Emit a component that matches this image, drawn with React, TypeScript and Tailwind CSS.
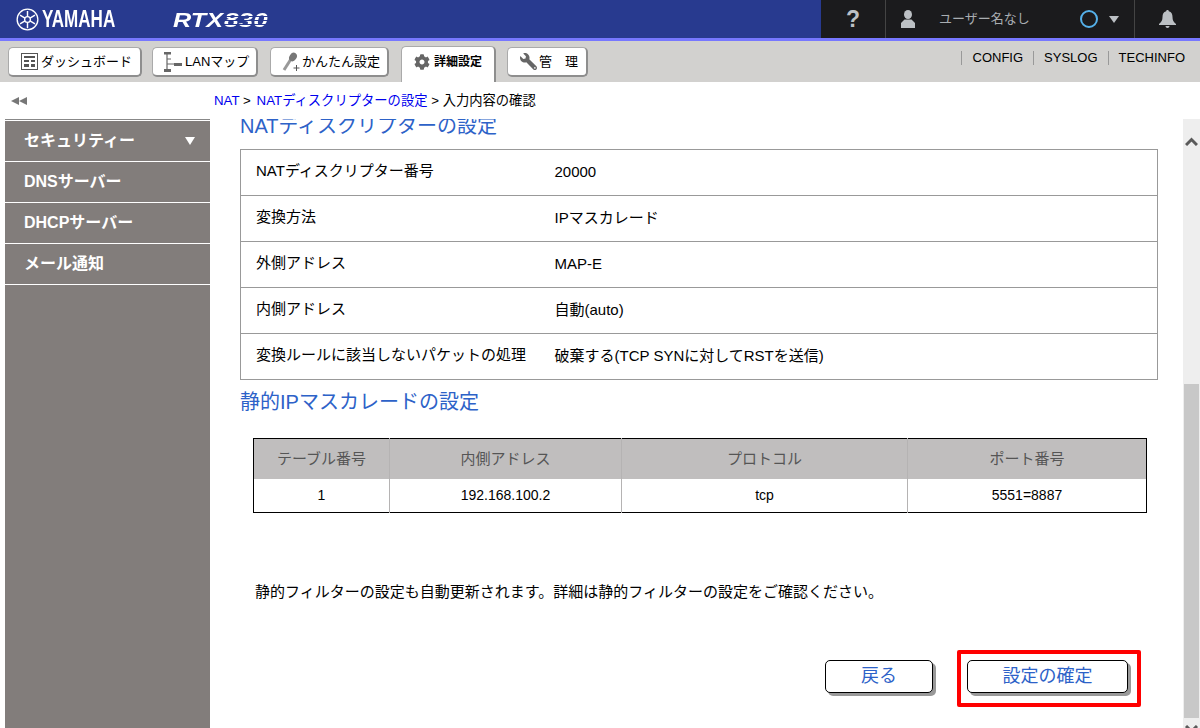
import { FaCog, FaWrench } from "react-icons/fa";

const font = "font-['Liberation_Sans','Noto_Sans_CJK_JP',sans-serif]";

const descriptorRows = [
  ["NATディスクリプター番号", "20000"],
  ["変換方法", "IPマスカレード"],
  ["外側アドレス", "MAP-E"],
  ["内側アドレス", "自動(auto)"],
  ["変換ルールに該当しないパケットの処理", "破棄する(TCP SYNに対してRSTを送信)"],
];

const sideItems = ["セキュリティー", "DNSサーバー", "DHCPサーバー", "メール通知"];

function YamahaMark() {
  return (
    <svg width="23" height="23" viewBox="0 0 24 24" fill="none" stroke="#fff" className="shrink-0">
      <circle cx="12" cy="12" r="10.8" strokeWidth="1.4" />
      <circle cx="12" cy="12" r="3" strokeWidth="1.4" />
      <g strokeWidth="1.5">
        <path d="M12 3v6M12 15v6M4.2 7.5l5.2 3M14.6 13.5l5.2 3M4.2 16.5l5.2-3M14.6 10.5l5.2-3" />
      </g>
    </svg>
  );
}

function DashIcon() {
  return (
    <svg width="17" height="17" viewBox="0 0 17 17" className="shrink-0">
      <rect x="0.5" y="0.5" width="16" height="16" fill="#fff" stroke="#555" />
      <path d="M3 3h11v2H3zM3 7h5v2H3zM10 7h4v2h-4zM3 11h5v3H3zM10 11h4v3h-4z" fill="#555" />
    </svg>
  );
}

function LanIcon() {
  return (
    <svg width="18" height="20" viewBox="0 0 18 20" className="shrink-0">
      <path d="M0 0h7v2.500H0zM0 17h7v3H0zM10 11h8v3h-8z" fill="#666" />
      <path d="M3 2v15M3 12h7M3 7h4" stroke="#666" strokeWidth="1.200" fill="none" />
    </svg>
  );
}

function KeyIcon() {
  return (
    <svg width="20" height="20" viewBox="0 0 20 20" className="shrink-0">
      <path d="M2 18 L9 7" stroke="#999" strokeWidth="3" />
      <ellipse cx="11" cy="5" rx="3.500" ry="4.500" transform="rotate(35 11 5)" fill="#777" />
      <path d="M14.500 13v6M11.500 16h6" stroke="#555" strokeWidth="1" />
    </svg>
  );
}

function UserIcon() {
  return (
    <svg width="14" height="18" viewBox="0 0 14 18" className="shrink-0">
      <ellipse cx="7" cy="4.500" rx="4" ry="4.500" fill="#bcc0c4" />
      <path d="M3.500 9.500h7L14 13v5H0v-5z" fill="#bcc0c4" />
    </svg>
  );
}

function BellIcon() {
  return (
    <svg width="17" height="18" viewBox="0 0 17 18">
      <path
        d="M8.500 0c1 0 1.300.7 1.300 1.300C12.500 2 13.500 4 13.500 7c0 3.500 1 5 3.500 7v1H0v-1c2.500-2 3.500-3.500 3.500-7 0-3 1-5 3.700-5.700C7.200.7 7.500 0 8.500 0z"
        fill="#bcc0c4"
      />
      <path d="M6.500 16h4c0 1.200-1 2-2 2s-2-.8-2-2z" fill="#bcc0c4" />
    </svg>
  );
}

function NavButton({ icon, label, className }: { icon: React.ReactNode; label: string; className: string }) {
  return (
    <div
      className={`flex h-[30px] items-center rounded-[5px] border border-[#aaa] border-r-2 border-b-2 border-r-[#8e8e8e] border-b-[#8e8e8e] bg-white text-[13px] text-black ${className}`}
    >
      {icon}
      <span>{label}</span>
    </div>
  );
}

export default function App() {
  return (
    <div className={`${font} flex h-[728px] w-[1200px] flex-col overflow-hidden bg-white`}>
      <header className="flex h-[41px] shrink-0 border-b-[3px] border-[#7777ff] bg-[#283a8f]">
        <div className="flex w-[821px] items-center pl-[16px]">
          <YamahaMark />
          <span className="ml-[3px] w-[75px] origin-left scale-x-[0.71] text-[24px] leading-none font-bold text-white">
            YAMAHA
          </span>
          <span className="ml-[56px] flex text-[21px] leading-none font-black text-white italic">
            <span className="w-[51px] origin-left scale-x-[1.2]">RTX</span>
            <span className="origin-left scale-x-[1.25] bg-[repeating-linear-gradient(180deg,#fff_0,#fff_3px,#283a8f_3px,#283a8f_4px)] bg-clip-text text-transparent">
              830
            </span>
          </span>
        </div>
        <div className="flex flex-1 items-center bg-[#1b1b1d] text-[#bcc0c4]">
          <div className="flex h-full w-[65px] items-center justify-center border-r border-[#444] text-[23px] font-bold">
            ?
          </div>
          <div className="ml-[15px]">
            <UserIcon />
          </div>
          <span className="ml-[24px] w-[141px] text-[13px] text-[#a9adb1]">ユーザー名なし</span>
          <div className="h-[18px] w-[18px] rounded-full border-2 border-[#55b1ea]" />
          <div className="ml-[11px] h-0 w-0 border-x-[5px] border-t-[7px] border-x-transparent border-t-[#bcc0c4]" />
          <div className="ml-[15px] flex h-full flex-1 items-center justify-center border-l border-[#444]">
            <BellIcon />
          </div>
        </div>
      </header>

      <nav className="flex h-[41px] shrink-0 items-start bg-[#d2d1cf] pt-[6px] pl-[8px]">
        <NavButton className="w-[134px] gap-[3px] pl-[12px]" icon={<DashIcon />} label="ダッシュボード" />
        <NavButton className="ml-[10px] w-[106px] gap-[3px] pl-[11px]" icon={<LanIcon />} label="LANマップ" />
        <NavButton className="ml-[12px] w-[119px] gap-[0px] pl-[11px]" icon={<KeyIcon />} label="かんたん設定" />
        <div className="mt-[-1px] ml-[12px] flex h-[36px] w-[95px] items-center gap-[4px] rounded-t-[5px] border border-r-2 border-b-0 border-[#aaa] border-r-[#8e8e8e] bg-white pb-[6px] pl-[12px] text-[12px] font-bold text-black">
          <FaCog size={16} color="#666" className="shrink-0" />
          <span>詳細設定</span>
        </div>
        <NavButton
          className="ml-[11px] w-[81px] gap-[2px] pl-[12px]"
          icon={<FaWrench size={17} color="#666" className="shrink-0 scale-x-[-1]" />}
          label="管　理"
        />
        <div className="ml-auto flex pt-[4px] pr-[15px] text-[13px] leading-[14px] text-black">
          <span className="border-l border-[#999] pl-[11px]">CONFIG</span>
          <span className="ml-[10px] border-l border-[#999] pl-[10px]">SYSLOG</span>
          <span className="ml-[10px] border-l border-[#999] pl-[10px]">TECHINFO</span>
        </div>
      </nav>

      <div className="flex h-[37px] shrink-0 items-center">
        <div className="flex w-[214px] pl-[11px]">
          <div className="h-0 w-0 border-y-[4px] border-r-[8px] border-y-transparent border-r-[#777]" />
          <div className="h-0 w-0 border-y-[4px] border-r-[8px] border-y-transparent border-r-[#777]" />
        </div>
        <p className="text-[13.3px] text-black">
          <span className="text-[#0000ee]">NAT</span> &gt; <span className="ml-[2px] text-[#0000ee]">NATディスクリプターの設定</span> &gt; 入力内容の確認
        </p>
      </div>

      <div className="flex min-h-0 flex-1">
        <aside className="ml-[5px] w-[205px] shrink-0 border-t border-[#888] bg-[#827d7b] text-[16px] font-bold text-white">
          {sideItems.map((item, i) => (
            <div
              key={item}
              className={`flex items-center justify-between border-b border-white pr-[15px] pl-[19px] ${i === 0 ? "h-[42px] border-t" : "h-[41px]"}`}
            >
              <span>{item}</span>
              {i === 0 && <div className="h-0 w-0 border-x-[5px] border-t-[8px] border-x-transparent border-t-white" />}
            </div>
          ))}
        </aside>

        <main className="relative min-w-0 flex-1 overflow-hidden pl-[30px]">
          <h2 className="mt-[-6px] text-[20px] leading-[26px] text-[#2d62c8]">NATディスクリプターの設定</h2>
          <table className="mt-[10px] w-[918px] border-collapse text-[15px] text-black">
            <tbody>
              {descriptorRows.map(([name, value]) => (
                <tr key={name} className="h-[46px] border border-[#999]">
                  <td className="w-[314px] pb-[2px] pl-[15px]">{name}</td>
                  <td>{value}</td>
                </tr>
              ))}
            </tbody>
          </table>
          <h2 className="mt-[9px] text-[20px] leading-[26px] text-[#2d62c8]">静的IPマスカレードの設定</h2>

          <table className="mt-[23px] ml-[13px] w-[894px] table-fixed border-collapse border border-black text-center text-[15px]">
            <thead>
              <tr className="h-[40px] bg-[#c0bebe] text-[#555]">
                <th className="w-[136px] border-r border-[#b5b3b3] font-normal">テーブル番号</th>
                <th className="w-[232px] border-r border-[#b5b3b3] font-normal">内側アドレス</th>
                <th className="w-[286px] border-r border-[#b5b3b3] font-normal">プロトコル</th>
                <th className="font-normal">ポート番号</th>
              </tr>
            </thead>
            <tbody>
              <tr className="h-[34px] text-[14px] text-black">
                <td className="border-r border-[#b5b3b3]">1</td>
                <td className="border-r border-[#b5b3b3]">192.168.100.2</td>
                <td className="border-r border-[#b5b3b3]">tcp</td>
                <td>5551=8887</td>
              </tr>
            </tbody>
          </table>

          <p className="mt-[68px] ml-[15px] text-[15px] text-black">
            静的フィルターの設定も自動更新されます。詳細は静的フィルターの設定をご確認ください。
          </p>

          <div className="mt-[56px] ml-[585px] flex gap-[34px] text-[18px] text-[#2d62c8]">
            <button className="h-[33px] w-[108px] rounded-[5px] border border-black bg-white shadow-[3px_3px_0_#999]">戻る</button>
            <button className="h-[33px] w-[161px] rounded-[5px] border border-black bg-white shadow-[3px_3px_0_#999]">設定の確定</button>
          </div>
          <div className="absolute top-[531px] left-[747px] h-[57px] w-[184px] rounded-[2px] border-4 border-[#ff0000]" />
        </main>

        <div className="flex w-[17px] shrink-0 flex-col overflow-hidden bg-[#eeeeee]">
          <div className="flex h-[43px] shrink-0 justify-center pt-[18px]">
            <svg width="13" height="9" viewBox="0 0 13 9" fill="none" stroke="#5a5a5a" strokeWidth="3">
              <path d="M1 8l5.500-5.500L12 8" />
            </svg>
          </div>
          <div className="mt-[222px] mx-[1px] h-[334px] shrink-0 bg-[#c8c8c8]" />
          <div className="mt-[7px] flex shrink-0 justify-center">
            <svg width="13" height="9" viewBox="0 0 13 9" fill="none" stroke="#5a5a5a" strokeWidth="3">
              <path d="M1 1l5.500 5.500L12 1" />
            </svg>
          </div>
        </div>
      </div>
    </div>
  );
}
